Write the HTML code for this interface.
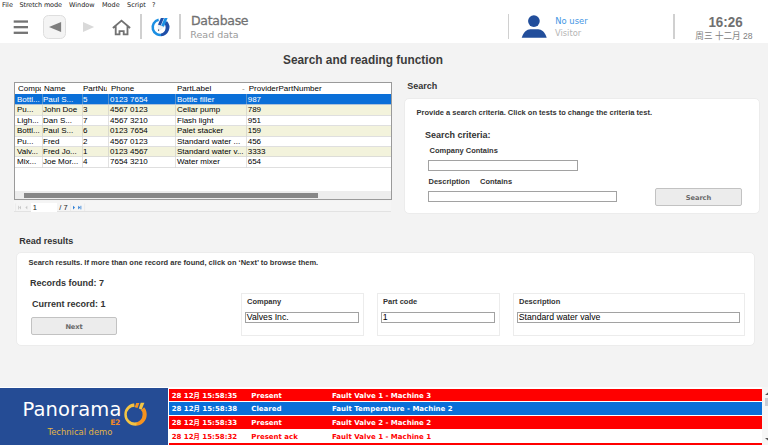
<!DOCTYPE html>
<html><head><meta charset="utf-8">
<style>
*{box-sizing:border-box;margin:0;padding:0}
html,body{width:768px;height:445px;overflow:hidden;background:#f3f3f3;font-family:"Liberation Sans","Noto Sans CJK SC",sans-serif;color:#222}
.abs{position:absolute}
#menubar{left:0;top:0;width:768px;height:10px;background:#fff;font-family:"DejaVu Sans","Liberation Sans",sans-serif;font-size:6.5px;line-height:10px;color:#222;white-space:nowrap}
#menubar span{position:absolute;top:-0.3px}
#toolbar{left:0;top:10px;width:768px;height:33px;background:#fff}
.vdiv{position:absolute;width:1.6px;background:#d0d0d0}
h1{position:absolute;left:0;width:726px;top:53px;text-align:center;font-size:11.85px;font-weight:bold;color:#3c3c3c;line-height:14px}
.sect{position:absolute;font-size:9px;font-weight:bold;color:#333;line-height:10px}
.card{position:absolute;background:#fff;border-radius:5px;border:1px solid #ececec}
.b{font-weight:bold}
.lbl{position:absolute;font-size:7.5px;font-weight:bold;color:#333;line-height:8px;white-space:nowrap}
.inp{position:absolute;background:#fff;border:1px solid #a2a2a2;height:8px;font-size:8.7px;line-height:6px;padding-left:0.8px;color:#000;white-space:nowrap}
.btn{position:absolute;background:#ececec;border:1px solid #c2c2c2;border-radius:2px;font-family:"DejaVu Sans","Liberation Sans",sans-serif;font-size:6.7px;font-weight:bold;color:#6a6a6a;text-align:center;letter-spacing:-0.1px}
#grid{left:14px;top:82px;width:377.5px;height:118px;background:#fff;border:1px solid #9a9a9a}
.row{position:absolute;left:0;width:376px;height:10.45px;font-size:8px;line-height:10.45px;color:#000;white-space:nowrap}
.row span{position:absolute;top:0.5px}
.row.alt{background:#f3f3dc}
.row.sel{background:#0a6fd8;color:#fff}
.gl{position:absolute;left:0;width:375px;height:1px;background:#dcdcdc}
.al{position:absolute;left:0;width:593.4px;height:12.9px;font-family:"DejaVu Sans","Liberation Sans","Noto Sans CJK SC",sans-serif;font-weight:bold;font-size:7px;line-height:13.2px;white-space:nowrap}
.al i{font-style:normal;font-size:6.3px;line-height:0}
.al span{position:absolute;top:1.3px}
</style></head><body>

<div id="menubar" class="abs">
<span style="left:2px">File</span><span style="left:19.6px;letter-spacing:-0.15px">Stretch mode</span><span style="left:69px">Window</span><span style="left:102px">Mode</span><span style="left:127px">Script</span><span style="left:152px">?</span>
</div>

<div id="toolbar" class="abs">
 <!-- hamburger -->
 <svg class="abs" style="left:13px;top:10px" width="16" height="15" viewBox="0 0 16 15"><g fill="#747474"><rect x="0.7" y="0.4" width="14.3" height="2.3"/><rect x="0.7" y="6.0" width="14.3" height="2.3"/><rect x="0.7" y="11.65" width="14.3" height="2.3"/></g></svg>
 <!-- back -->
 <div class="abs" style="left:43.2px;top:5.25px;width:23.1px;height:23.35px;border:1px solid #dedede;border-radius:5.5px;background:#f4f4f4"></div>
 <svg class="abs" style="left:49px;top:11.9px" width="13" height="10" viewBox="0 0 13 10"><path d="M12.1 0 L0 5 L12.1 10Z" fill="#7e7e7e"/></svg>
 <svg class="abs" style="left:82.9px;top:11.9px" width="13" height="10" viewBox="0 0 13 10"><path d="M0 0 L11.2 5 L0 10Z" fill="#d9d9d9"/></svg>
 <!-- home -->
 <svg class="abs" style="left:111px;top:8.5px" width="21" height="18" viewBox="0 0 21 18"><path d="M1.9 9 L10.5 1.6 L19.1 9 M4.7 7.2 V15.4 H8.5 V12.1 H12.7 V15.4 H16.5 V7.2" fill="none" stroke="#727272" stroke-width="1.85" stroke-linejoin="miter"/></svg>
 <div class="vdiv" style="left:140.2px;top:4px;height:25px"></div>
 <!-- logo -->
 <svg class="abs" style="left:148px;top:5px" width="26" height="24" viewBox="148 15 26 24"><path d="M158.67 19.80 A7.70 7.70 0 1 0 162.78 34.62" fill="none" stroke="#1b8fe3" stroke-width="2.5"/><path d="M161.18 36.27 A9 9 0 0 0 167.09 21.28 L163.31 22.70 A6.4 6.4 0 0 1 160.86 33.78 Z" fill="#1f4fa8"/><path d="M160.9 17.9 L164.0 17.9 L160.7 25.8 L157.9 24.8Z" fill="#1f4fa8"/>
<path d="M164.5 17.9 L167.6 17.9 L163.9 27.1 L161.1 26.0Z" fill="#1b8fe3"/>
<path d="M157.9 24.8 L163.9 27.1 L158.3 31Z" fill="#eef3f8" stroke="#c9d6e4" stroke-width="0.3"/>
<path d="M158.05 29.2 L159.4 30.1 L158.2 31.2Z" fill="#334"/></svg>
 <div class="vdiv" style="left:179.4px;top:4px;height:25px"></div>
 <div class="abs" style="left:191px;top:3.3px;font-family:'DejaVu Sans','Liberation Sans',sans-serif;font-size:12.5px;line-height:16px;color:#727272;letter-spacing:-0.3px;-webkit-text-stroke:0.3px #727272">Database</div>
 <div class="abs" style="left:190.3px;top:19.4px;font-family:'DejaVu Sans','Liberation Sans',sans-serif;font-size:9.5px;line-height:12px;color:#9a9a9a;letter-spacing:0">Read data</div>

 <div class="vdiv" style="left:507.8px;top:4px;height:25px"></div>
 <svg class="abs" style="left:520px;top:4px" width="28" height="25" viewBox="520 14 28 25"><circle cx="533.9" cy="21.1" r="5.85" fill="#224e9b"/><path d="M521.7 37.7 C523.5 32 527 29.3 530.2 29.3 L538.2 29.3 C541.4 29.3 545 32 546.7 37.7Z" fill="#224e9b"/></svg>
 <div class="abs" style="left:555.3px;top:5.8px;font-family:'DejaVu Sans','Liberation Sans',sans-serif;font-size:8.4px;line-height:11px;color:#4496e4">No user</div>
 <div class="abs" style="left:555px;top:18.4px;font-family:'DejaVu Sans','Liberation Sans',sans-serif;font-size:8.3px;line-height:11px;color:#b5b5b5">Visitor</div>
 <div class="vdiv" style="left:673.2px;top:4px;height:25px"></div>
 <div class="abs" style="left:680px;top:3.8px;width:91px;text-align:center;font-family:'Liberation Sans',sans-serif;font-weight:bold;font-size:14.4px;line-height:16px;color:#707070;letter-spacing:0;transform:scaleX(0.93)">16:26</div>
 <div class="abs" style="left:678px;top:20.5px;width:92px;text-align:center;font-family:'Liberation Sans','Noto Sans CJK SC',sans-serif;font-size:8.6px;line-height:11px;color:#808080;white-space:nowrap">周三 十二月 28</div>
</div>

<h1>Search and reading function</h1>

<!-- grid -->
<div id="grid" class="abs">
 <div class="row" style="top:0px"><span style="left:3px;width:23px;overflow:hidden">Compa</span><span style="left:29px">Name</span><span style="left:68px;width:24px;overflow:hidden">PartNu</span><span style="left:96px">Phone</span><span style="left:162px">PartLabel</span><span style="left:227px;color:#888">-</span><span style="left:233.7px">ProviderPartNumber</span></div>
 <div class="row sel" style="top:11.25px"><span style="left:2px">Bottl...</span><span style="left:28px">Paul S...</span><span style="left:68px">5</span><span style="left:95px">0123 7654</span><span style="left:162px">Bottle filler</span><span style="left:232.7px">987</span></div>
 <div class="row alt" style="top:21.7px"><span style="left:2px">Pu...</span><span style="left:28px">John Doe</span><span style="left:68px">3</span><span style="left:95px">4567 0123</span><span style="left:162px">Cellar pump</span><span style="left:232.7px">789</span></div>
 <div class="row" style="top:32.15px"><span style="left:2px">Ligh...</span><span style="left:28px">Dan S...</span><span style="left:68px">7</span><span style="left:95px">4567 3210</span><span style="left:162px">Flash light</span><span style="left:232.7px">951</span></div>
 <div class="row alt" style="top:42.6px"><span style="left:2px">Bottl...</span><span style="left:28px">Paul S...</span><span style="left:68px">6</span><span style="left:95px">0123 7654</span><span style="left:162px">Palet stacker</span><span style="left:232.7px">159</span></div>
 <div class="row" style="top:53.05px"><span style="left:2px">Pu...</span><span style="left:28px">Fred</span><span style="left:68px">2</span><span style="left:95px">4567 0123</span><span style="left:162px">Standard water ...</span><span style="left:232.7px">456</span></div>
 <div class="row alt" style="top:63.5px"><span style="left:2px">Valv...</span><span style="left:28px">Fred Jo...</span><span style="left:68px">1</span><span style="left:95px">0123 4567</span><span style="left:162px">Standard water v...</span><span style="left:232.7px">3333</span></div>
 <div class="row" style="top:73.95px"><span style="left:2px">Mix...</span><span style="left:28px">Joe Mor...</span><span style="left:68px">4</span><span style="left:95px">7654 3210</span><span style="left:162px">Water mixer</span><span style="left:232.7px">654</span></div>
 <div class="abs" style="left:26.5px;top:11px;width:1px;height:74px;background:rgba(190,190,190,.45)"></div><div class="abs" style="left:66.5px;top:11px;width:1px;height:74px;background:rgba(190,190,190,.45)"></div><div class="abs" style="left:92.5px;top:11px;width:1px;height:74px;background:rgba(190,190,190,.45)"></div><div class="abs" style="left:160px;top:11px;width:1px;height:74px;background:rgba(190,190,190,.45)"></div><div class="abs" style="left:230.5px;top:11px;width:1px;height:74px;background:rgba(190,190,190,.45)"></div><div class="gl" style="top:21.20px;width:376px;background:rgba(215,215,215,.8)"></div><div class="gl" style="top:31.65px;width:376px;background:rgba(215,215,215,.8)"></div><div class="gl" style="top:42.10px;width:376px;background:rgba(215,215,215,.8)"></div><div class="gl" style="top:52.55px;width:376px;background:rgba(215,215,215,.8)"></div><div class="gl" style="top:63.00px;width:376px;background:rgba(215,215,215,.8)"></div><div class="gl" style="top:73.45px;width:376px;background:rgba(215,215,215,.8)"></div><div class="gl" style="top:83.90px;width:376px;background:rgba(215,215,215,.8)"></div>
 <div class="abs" style="left:0;top:107.6px;width:376px;height:8.4px;background:#ededed"></div>
 <div class="abs" style="left:9.2px;top:110px;width:294px;height:5px;background:#878787"></div>
</div>
<!-- pager -->
<div class="abs" style="left:14px;top:201px;width:377px;height:11px;background:#f5f5f5;border-bottom:1px solid #e2e2e2"></div>
<div class="abs" style="left:30.6px;top:203px;width:26.7px;height:9.3px;background:#fff"></div>
<svg class="abs" style="left:14px;top:202px" width="80" height="11" viewBox="14 202 80 11">
<g fill="#c8c8c8"><rect x="18.1" y="205.8" width="0.8" height="3.6"/><path d="M21 205.8 L21 209.4 L19.1 207.6Z"/><path d="M27.3 205.8 L27.3 209.4 L25.4 207.6Z"/></g>
<g fill="#2d7fd6"><path d="M73 205.8 L73 209.4 L75 207.6Z"/><path d="M78.2 205.8 L78.2 209.4 L80.2 207.6Z"/><rect x="80.5" y="205.8" width="0.8" height="3.6"/></g>
<g fill="#e4e4e4"><rect x="70.2" y="203.5" width="0.6" height="8"/><rect x="84.5" y="203.5" width="0.6" height="8"/><rect x="15.5" y="203.5" width="0.6" height="8"/></g>
</svg>
<div class="abs" style="left:32.7px;top:202.5px;font-size:7.5px;line-height:10px;color:#222">1</div>
<div class="abs" style="left:59.3px;top:202.5px;font-size:7.5px;line-height:10px;color:#222">/ 7</div>

<!-- search -->
<div class="sect" style="left:407.3px;top:80.9px">Search</div>
<div class="card" style="left:404px;top:97.7px;width:355.5px;height:116px"></div>
<div class="lbl" style="left:416.5px;top:108.7px">Provide a search criteria. Click on tests to change the criteria test.</div>
<div class="sect" style="left:425px;top:130px">Search criteria:</div>
<div class="lbl" style="left:429.5px;top:146.5px">Company Contains</div>
<div class="inp" style="left:428px;top:160px;width:150px;height:11px"></div>
<div class="lbl" style="left:428.5px;top:177.5px">Description</div>
<div class="lbl" style="left:480px;top:177.5px">Contains</div>
<div class="inp" style="left:428px;top:191px;width:189px;height:11px"></div>
<div class="btn" style="left:655px;top:188px;width:87px;height:18px;line-height:19px">Search</div>

<!-- results -->
<div class="sect" style="left:19.3px;top:236.3px">Read results</div>
<div class="card" style="left:16px;top:251.5px;width:739px;height:94px"></div>
<div class="lbl" style="left:28.5px;top:258.8px">Search results. If more than one record are found, click on ‘Next’ to browse them.</div>
<div class="sect" style="left:30px;top:278px">Records found: 7</div>
<div class="sect" style="left:32px;top:299px">Current record: 1</div>
<div class="btn" style="left:31px;top:317px;width:86px;height:18px;line-height:19.5px">Next</div>

<div class="abs" style="left:241px;top:293px;width:123px;height:43px;border:1px solid #ececec;background:#fff"></div>
<div class="lbl" style="left:247px;top:297.6px">Company</div>
<div class="inp" style="left:245px;top:312px;width:114px;height:11px;line-height:9px">Valves Inc.</div>

<div class="abs" style="left:377px;top:293px;width:123px;height:43px;border:1px solid #ececec;background:#fff"></div>
<div class="lbl" style="left:383px;top:297.6px">Part code</div>
<div class="inp" style="left:381px;top:312px;width:114px;height:11px;line-height:9px">1</div>

<div class="abs" style="left:513px;top:293px;width:232px;height:43px;border:1px solid #ececec;background:#fff"></div>
<div class="lbl" style="left:519px;top:297.6px">Description</div>
<div class="inp" style="left:517px;top:312px;width:223px;height:11px;line-height:9px">Standard water valve</div>

<!-- bottom -->
<div class="abs" style="left:0;top:387px;width:768px;height:58px;background:#fff"></div>
<div class="abs" style="left:0;top:388px;width:168px;height:57px;background:#254c95"></div>
<div class="abs" style="left:22.5px;top:397.5px;font-family:'DejaVu Sans','Liberation Sans',sans-serif;font-size:19.5px;line-height:24px;color:#fff;letter-spacing:0.12px">Panorama</div>
<svg class="abs" style="left:120px;top:400px" width="30" height="28" viewBox="120 400 30 28"><defs><linearGradient id="pg" x1="124" y1="0" x2="147" y2="0" gradientUnits="userSpaceOnUse"><stop offset="0" stop-color="#f4c745"/><stop offset="0.50" stop-color="#f4c040"/><stop offset="0.60" stop-color="#f6931f"/><stop offset="1" stop-color="#f6931f"/></linearGradient></defs><path fill-rule="evenodd" fill="url(#pg)" d="M124.30 414.50 a11.20 11.20 0 1 0 22.40 0 a11.20 11.20 0 1 0 -22.40 0Z M126.80 414.70 a7.90 7.90 0 1 0 15.80 0 a7.90 7.90 0 1 0 -15.80 0Z"/><path d="M135.00 409.50 L133.79 400.60 L146.22 405.50 L140.50 410.50Z" fill="#254c95"/><path d="M136.2 403 L139.4 403 L137.5 407.9 L134.7 407.2Z" fill="#f6931f"/><path d="M140.7 402.8 L144.4 402.8 L141.6 409.8 L138.8 408.6Z" fill="#f4c745"/></svg>
<div class="abs" style="left:110.3px;top:418.6px;font-family:'DejaVu Sans',sans-serif;font-weight:bold;font-size:7.6px;line-height:8px;color:#f08a24;letter-spacing:-0.6px">E2</div>
<div class="abs" style="left:47.5px;top:426.5px;font-family:'DejaVu Sans','Liberation Sans',sans-serif;font-size:8.4px;line-height:11px;color:#e3b545;white-space:nowrap">Technical demo</div>

<div class="abs" style="left:169px;top:387px;width:593.4px;height:58px;overflow:hidden;background:#fff">
 <div class="al" style="top:1.60px;background:#ff0000;color:#fff"><span style="left:2.7px">28 12<i>月</i> 15:58:35</span><span style="left:82.3px">Present</span><span style="left:163px">Fault Valve 1 - Machine 3</span></div>
 <div class="al" style="top:15.15px;background:#0a6fd8;color:#fff"><span style="left:2.7px">28 12<i>月</i> 15:58:38</span><span style="left:82.3px">Cleared</span><span style="left:163px">Fault Temperature - Machine 2</span></div>
 <div class="al" style="top:28.70px;background:#ff0000;color:#fff"><span style="left:2.7px">28 12<i>月</i> 15:58:33</span><span style="left:82.3px">Present</span><span style="left:163px">Fault Valve 2 - Machine 2</span></div>
 <div class="al" style="top:42.25px;background:#fff;color:#ff0000"><span style="left:2.7px">28 12<i>月</i> 15:58:32</span><span style="left:82.3px">Present ack</span><span style="left:163px">Fault Valve 1 - Machine 1</span></div>
 <div class="al" style="top:55.80px;background:#ff0000"></div>
</div>
<div class="abs" style="left:762.4px;top:387px;width:5.6px;height:58px;background:#f6f6f6"></div>
<div class="abs" style="left:764.7px;top:397.7px;width:3.3px;height:8.2px;background:#c9cdd4"></div>
<svg class="abs" style="left:764px;top:392px" width="4" height="4" viewBox="0 0 4 4"><path d="M1 3 L4 0.6 L4 3Z" fill="#555"/></svg>
<svg class="abs" style="left:764px;top:437px" width="4" height="4" viewBox="0 0 4 4"><path d="M1 1 L4 3.4 L4 1Z" fill="#555"/></svg>
</body></html>
